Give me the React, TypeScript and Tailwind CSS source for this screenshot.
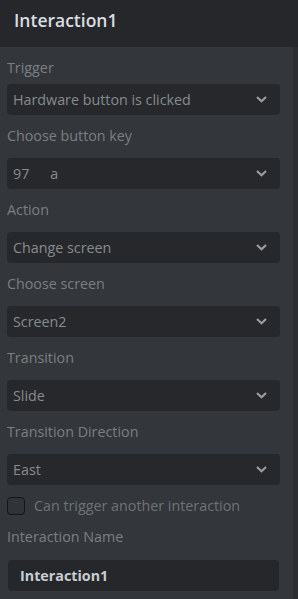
import { ReactNode } from 'react';

const font = { fontFamily: '"Open Sans", "Noto Sans", sans-serif' };

const Chevron = () => (
  <svg width="11" height="7" viewBox="0 0 11 7" fill="none" className="shrink-0">
    <path d="M1 1L5.5 5.2L10 1" stroke="#9a9da2" strokeWidth="2.2" strokeLinejoin="miter" />
  </svg>
);

const Label = ({ children, className }: { children: string; className: string }) => (
  <div className={`h-5 text-[14.3px] leading-5 text-[#7b7f84] ${className}`}>{children}</div>
);

const Select = ({ children }: { children: ReactNode }) => (
  <div className="flex h-[31px] w-[273px] items-center justify-between rounded-[4px] bg-[#26282c] pl-[6px] pr-[13px] text-[14.3px] leading-5 text-[#878b90]">
    <div className="flex items-center">{children}</div>
    <Chevron />
  </div>
);

const App = () => {
  return (
    <div className="flex h-[599px] w-[298px] flex-col overflow-hidden bg-[#2b2d31]" style={font}>
      <header className="h-[47px] shrink-0 bg-[#25272b] pl-[14px] pt-2 text-[17.5px] font-semibold leading-6 text-[#dadde1]">
        Interaction1
      </header>
      <div className="flex w-[293px] flex-1 flex-col bg-[#33363a] pl-[7px]">
        <Label className="mt-[11px] mb-[6px]">Trigger</Label>
        <Select>Hardware button is clicked</Select>

        <Label className="mt-[11px] mb-3">Choose button key</Label>
        <Select>
          <span>97</span>
          <span className="ml-[21px]">a</span>
        </Select>

        <Label className="mt-[11px] mb-3">Action</Label>
        <Select>Change screen</Select>

        <Label className="mt-[11px] mb-3">Choose screen</Label>
        <Select>Screen2</Select>

        <Label className="mt-[11px] mb-3">Transition</Label>
        <Select>Slide</Select>

        <Label className="mt-[11px] mb-3">Transition Direction</Label>
        <Select>East</Select>

        <label className="mt-3 flex h-[18px] items-center gap-[9px]">
          <span className="h-[18px] w-[18px] shrink-0 rounded-[4px] border-[1.5px] border-[#141517] bg-[#303337]" />
          <span className="text-[14.3px] leading-5 text-[#6f7378]">Can trigger another interaction</span>
        </label>

        <Label className="mt-3 mb-[13px]">Interaction Name</Label>
        <div className="ml-px flex h-[31px] w-[271px] items-center rounded-[4px] bg-[#25272b] pl-3 text-[14.3px] font-bold leading-5 text-[#c9cdd1]">
          Interaction1
        </div>
      </div>
    </div>
  );
};

export default App;
